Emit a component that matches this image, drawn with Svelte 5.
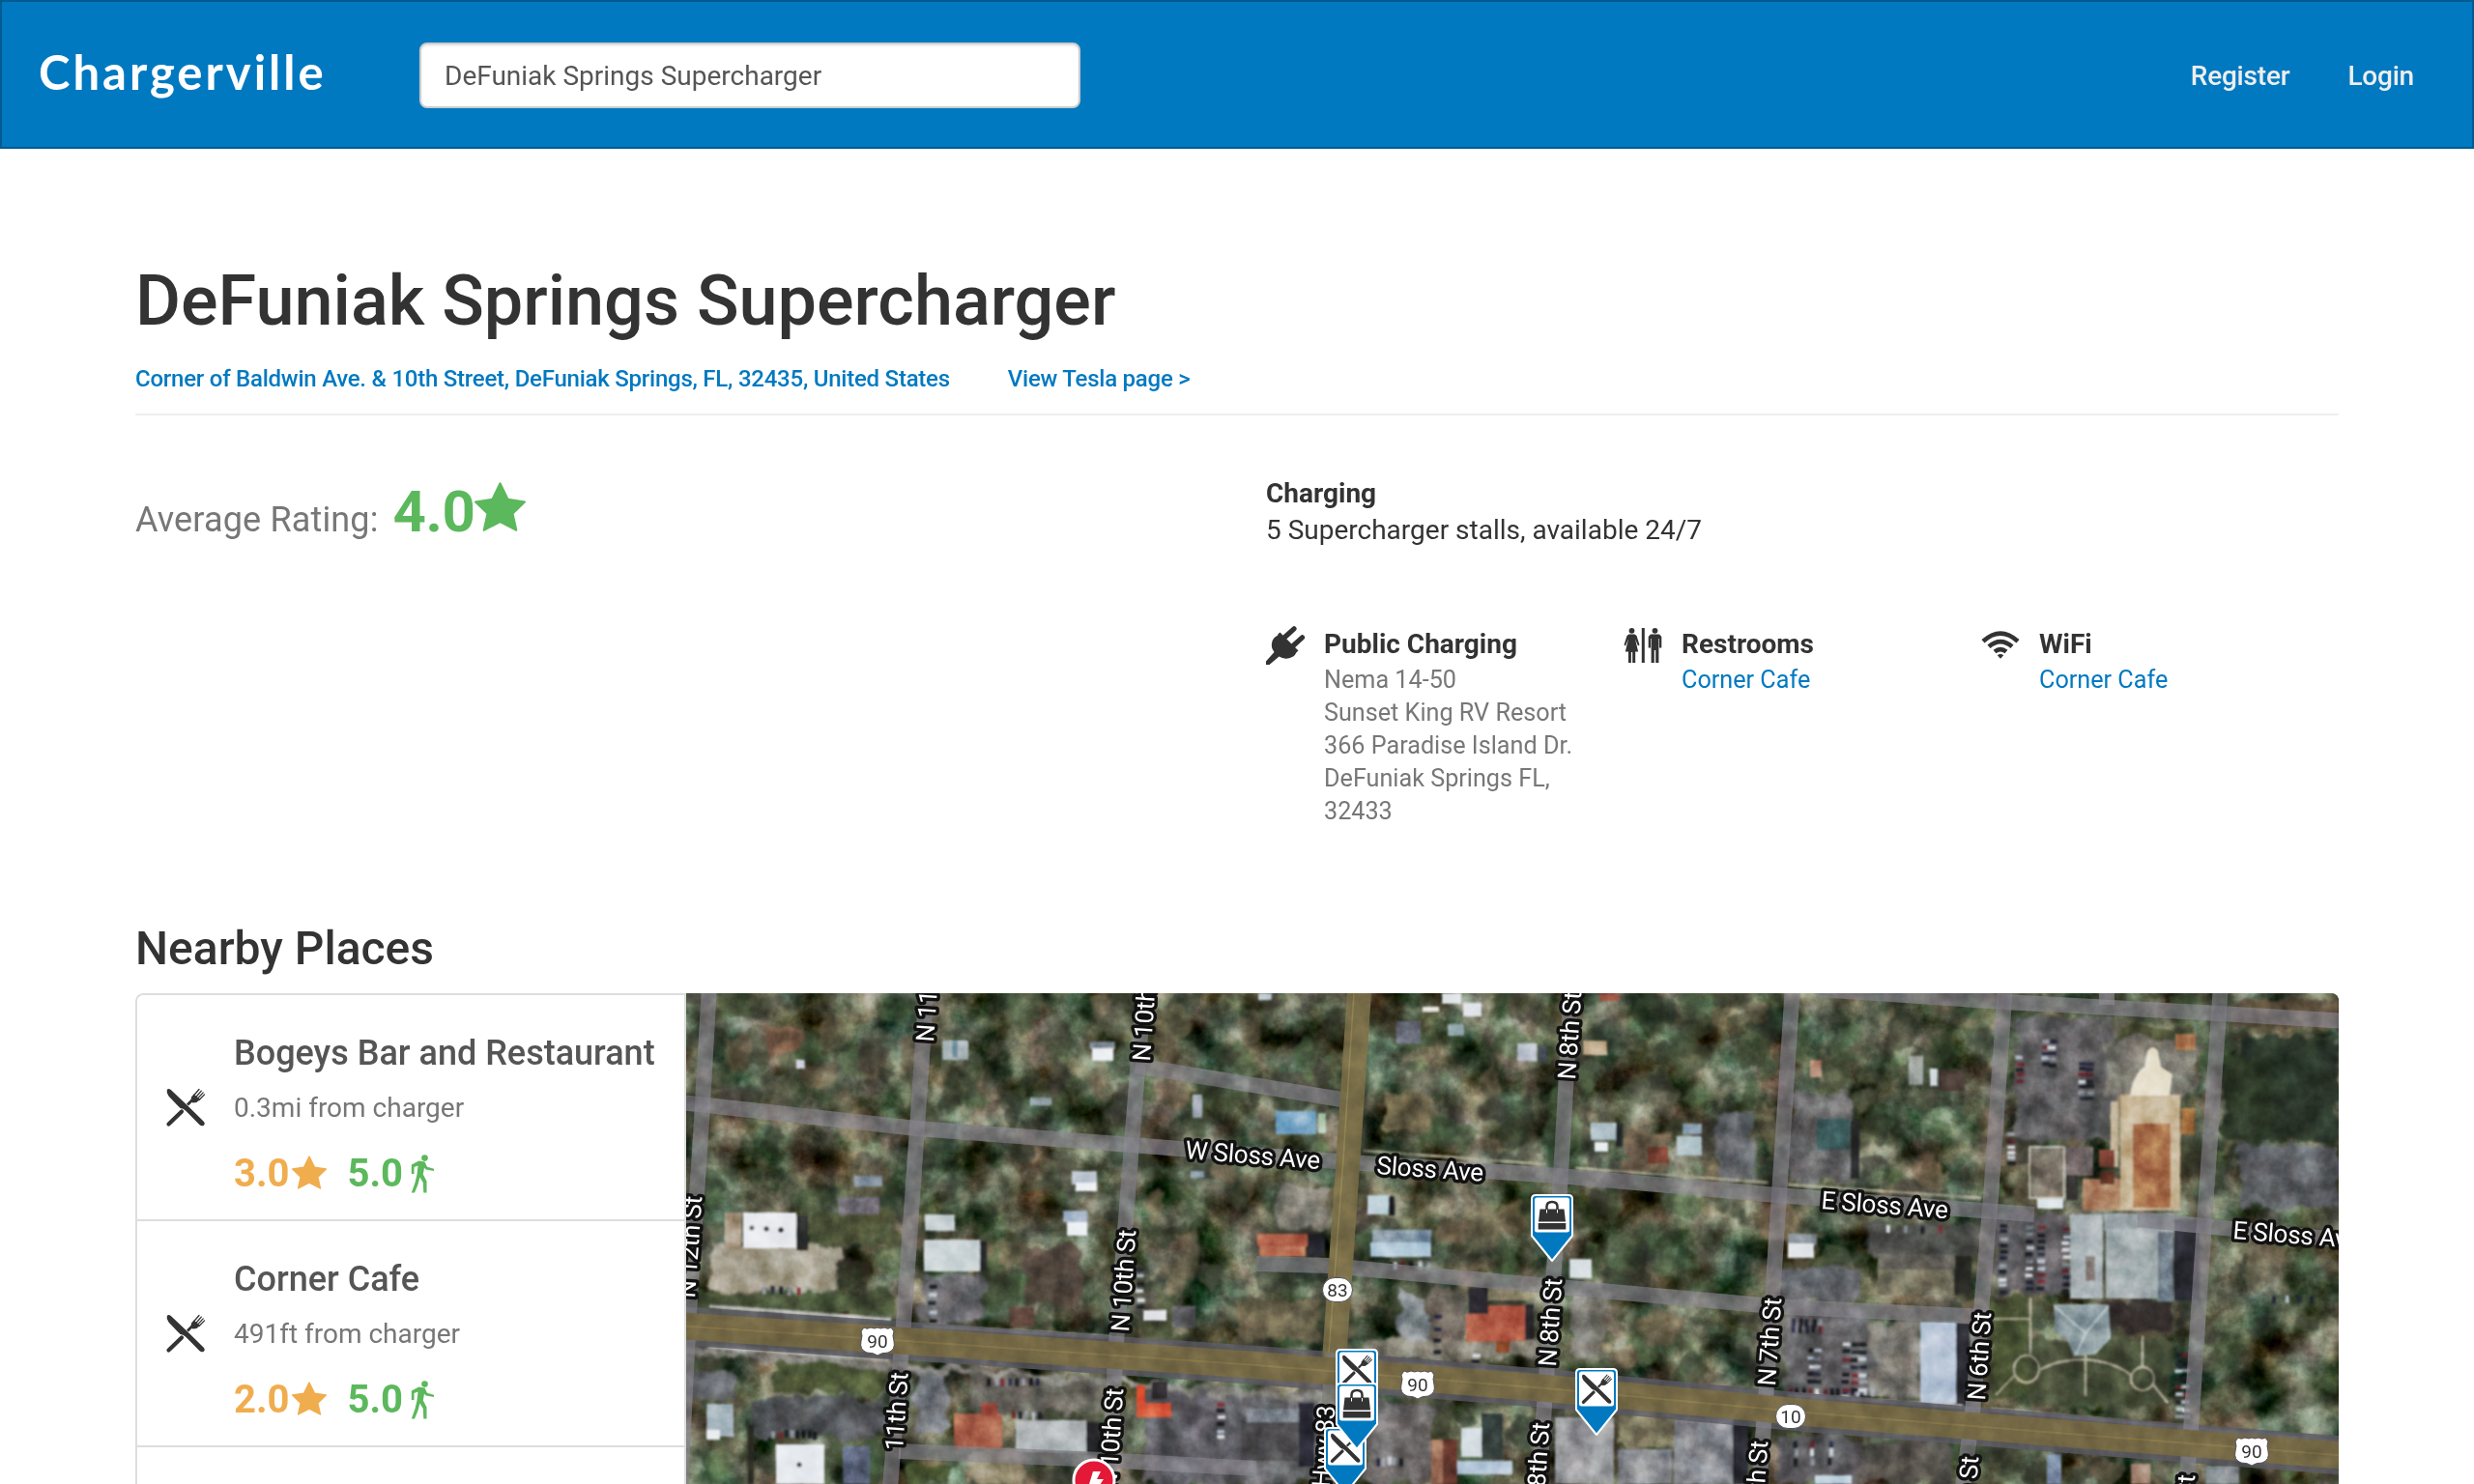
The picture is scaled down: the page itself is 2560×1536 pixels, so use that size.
<script>
  const details = [
    { icon: 'plug', title: 'Public Charging', lines: ['Nema 14-50', 'Sunset King RV Resort', '366 Paradise Island Dr.', 'DeFuniak Springs FL,', '32433'] },
    { icon: 'restroom', title: 'Restrooms', link: 'Corner Cafe' },
    { icon: 'wifi', title: 'WiFi', link: 'Corner Cafe' }
  ];

  const places = [
    { name: 'Bogeys Bar and Restaurant', distance: '0.3mi from charger', rating: '3.0', walk: '5.0' },
    { name: 'Corner Cafe', distance: '491ft from charger', rating: '2.0', walk: '5.0' }
  ];

  // Seeded generator, so the terrain is the same on every load.
  let seed = 11;
  const rnd = () => (seed = (seed * 16807) % 2147483647) / 2147483647;

  const treeColours = ['#2a3526', '#323d2b', '#38452f', '#43573a', '#4c6140', '#3a3734', '#6a604b', '#76654f', '#47503a', '#30362c', '#585648'];
  const trees = Array.from({ length: 640 }, () => ({
    x: 710 + rnd() * 1710,
    y: 1028 + rnd() * 508,
    rx: 6 + rnd() * 15,
    ry: 6 + rnd() * 17,
    fill: treeColours[Math.floor(rnd() * treeColours.length)]
  }));

  // Ground areas: x, y, width, height, colour
  const ground = [
    [735, 1288, 133, 48, '#b0a997'], [838, 1253, 90, 36, '#51563b'], [953, 1320, 65, 48, '#6b696f'],
    [722, 1338, 205, 22, '#485338'], [777, 1447, 138, 40, '#55565d'], [800, 1408, 112, 34, '#4a5534'], [1006, 1425, 138, 36, '#6a6660'],
    [949, 1420, 31, 63, '#7b7e86'], [710, 1420, 50, 30, '#63646a'], [1185, 1440, 110, 96, '#5f5e66'],
    [1000, 1500, 60, 36, '#a09478'], [935, 1515, 50, 21, '#46532f'], [792, 1067, 36, 22, '#84604c'], [1280, 1345, 85, 45, '#686049'],
    [1060, 1290, 60, 60, '#54483f'], [1778, 1147, 36, 76, '#67696f'], [1322, 1227, 50, 44, '#858178'],
    [1479, 1333, 38, 77, '#6e645c'], [1447, 1340, 30, 65, '#8f959c'], [1408, 1385, 190, 22, '#8b867b'],
    [1414, 1450, 68, 86, '#716c6e'], [1290, 1440, 80, 96, '#6a6b70'], [1846, 1353, 90, 95, '#68656a'], [1630, 1340, 30, 70, '#8a8780'],
    [1680, 1170, 45, 40, '#756350'], [1430, 1130, 50, 40, '#6a6148'], [1853, 1130, 62, 92, '#6a686b'],
    [1932, 1267, 115, 34, '#50504e'], [1840, 1313, 84, 34, '#686a70'], [1936, 1370, 52, 78, '#85817b'],
    [2085, 1053, 100, 127, '#625f63'], [2066, 1255, 76, 84, '#5e5b60'], [2190, 1063, 82, 20, '#4c5036'],
    [2180, 1075, 92, 60, '#7f7c74'], [2062, 1343, 38, 102, '#4b5535'], [2100, 1385, 145, 72, '#464c37'],
    [2318, 1075, 102, 106, '#28332a'], [2300, 1095, 50, 85, '#2a3524'], [2318, 1185, 102, 66, '#5f6168'], [2175, 1345, 72, 34, '#342d2b'],
    [1840, 1487, 84, 49, '#5d5b60'], [1924, 1493, 96, 43, '#55514d'], [1674, 1462, 60, 36, '#8a8468'], [2310, 1036, 110, 28, '#5d4f3d']
  ];

  // Buildings and other crisp shapes
  const buildings = [
    [824, 1258, 12, 36, '#2b2b2b'], [769, 1255, 55, 37, '#e9ebef'], [750, 1255, 17, 38, '#a6957f'], [975, 1077, 27, 20, '#a9b5b8'], [985, 1077, 6, 18, '#5e7f93'],
    [1127, 1078, 27, 8, '#84909a'], [1130, 1085, 22, 13, '#eceff1'], [1109, 1212, 26, 14, '#c3cbd5'], [1113, 1224, 22, 9, '#f0f2f5'],
    [1100, 1253, 25, 12, '#a3b4c8'], [1104, 1265, 21, 14, '#eef1f4'], [957, 1257, 31, 17, '#c9d1d4'], [1014, 1285, 7, 30, '#25262b'],
    [956, 1283, 58, 33, '#ced6d8'], [1183, 1356, 24, 11, '#e2e5e8'], [1213, 1352, 24, 22, '#66666a'], [1045, 1353, 25, 20, '#5f443b'],
    [987, 1463, 50, 37, '#a8614b'], [1015, 1452, 17, 14, '#a04b3e'], [1051, 1470, 73, 33, '#b5babc'], [1124, 1472, 15, 34, '#26272b'],
    [1176, 1434, 9, 33, '#e05233'], [1176, 1452, 36, 15, '#d85a3c'], [1192, 1430, 16, 18, '#2d2b2d'], [731, 1453, 28, 34, '#a9b8c0'], [731, 1480, 14, 10, '#e8ecef'],
    [774, 1475, 6, 61, '#2c2a24'], [803, 1495, 50, 41, '#e6eaef'], [872, 1497, 28, 39, '#5e6880'], [884, 1217, 29, 11, '#8b97a4'], [868, 1239, 42, 18, '#6c6870'],
    [1234, 1133, 10, 24, '#959daa'], [824, 1097, 9, 9, '#cdd0da'], [1066, 1136, 22, 8, '#81929a'], [1232, 1212, 14, 7, '#93a2b0'],
    [1492, 1028, 20, 11, '#e3e6e9'], [1472, 1042, 17, 5, '#e8e4dd'], [1514, 1038, 19, 14, '#e2e5ea'], [1570, 1080, 20, 18, '#b5bcc8'], [1592, 1082, 8, 16, '#454b57'],
    [1445, 1057, 25, 23, '#666874'], [1498, 1060, 17, 12, '#8fa4a8'], [1638, 1077, 25, 15, '#c4ae90'], [1655, 1028, 20, 8, '#99503f'], [1302, 1028, 14, 7, '#c5cfd5'],
    [1320, 1150, 42, 24, '#82adca'], [1364, 1152, 8, 21, '#bcd0bb'], [1646, 1162, 26, 18, '#a8bbc2'], [1650, 1182, 14, 10, '#e9eef1'], [1672, 1163, 7, 24, '#24262b'],
    [1741, 1163, 20, 11, '#8ba1b2'], [1735, 1176, 26, 20, '#b2c3c8'], [1705, 1187, 21, 17, '#713a2e'], [1415, 1237, 22, 20, '#c4d4dc'], [1437, 1238, 6, 20, '#202425'],
    [1420, 1273, 61, 14, '#8798a8'], [1418, 1286, 63, 15, '#b0c7d7'], [1301, 1277, 52, 13, '#b0604a'], [1303, 1290, 48, 11, '#c07d60'], [1353, 1277, 18, 24, '#28272d'],
    [1624, 1303, 23, 20, '#d9e0e3'], [1520, 1333, 20, 40, '#2d2b31'], [1540, 1332, 50, 14, '#8d866c'], [1517, 1360, 30, 29, '#b45e48'], [1540, 1351, 38, 37, '#b45c46'], [1578, 1350, 9, 36, '#2d2b2e'], [1548, 1388, 14, 12, '#94502f'],
    [1512, 1478, 21, 30, '#d0d9df'], [1508, 1512, 57, 14, '#b2c4d6'], [1533, 1463, 22, 47, '#34403c'], [1481, 1490, 12, 46, '#9a6b55'], [1493, 1490, 15, 46, '#6f3c30'],
    [1609, 1467, 61, 69, '#9c9c9f'], [1674, 1500, 56, 36, '#8f9196'], [1732, 1467, 61, 69, '#888a90'], [1793, 1467, 16, 69, '#2a2a33'], [1284, 1470, 60, 42, '#4d4c4e'], [1290, 1458, 54, 14, '#7c838c'], [1344, 1452, 16, 66, '#2b2935'],
    [1880, 1158, 34, 32, '#3c5c5d'], [1915, 1160, 9, 60, '#272726'], [1850, 1277, 30, 12, '#87939b'], [1850, 1287, 27, 15, '#e4e7e9'], [1975, 1093, 15, 30, '#9aa19b'], [1997, 1106, 8, 18, '#d7dce1'], [2006, 1107, 27, 22, '#463a36'], [1873, 1097, 12, 18, '#bb9480'],
    [1943, 1298, 80, 16, '#5e5c54'], [1943, 1314, 78, 26, '#76725f'], [2023, 1300, 17, 40, '#272824'], [1987, 1368, 37, 85, '#bac7d8'], [2024, 1370, 14, 84, '#2a2930'],
    [2100, 1187, 36, 54, '#7d7569'], [2137, 1187, 29, 30, '#6d6263'], [2138, 1216, 12, 26, '#302d2d'], [2108, 1241, 27, 10, '#dbe4e8'], [2155, 1220, 42, 33, '#b38a6b'],
    [2194, 1133, 62, 120, '#c6b494'], [2207, 1163, 39, 87, '#a9704b'], [2184, 1140, 8, 68, '#c9bba2'], [2257, 1147, 14, 27, '#a26d3d'], [2251, 1070, 21, 17, '#b48a5e'], [2172, 1190, 16, 18, '#7e4336'], [2173, 1212, 15, 14, '#603528'],
    [2142, 1257, 34, 87, '#a9b2b6'], [2177, 1256, 72, 18, '#9aa3a6'], [2179, 1272, 70, 72, '#a7b0b2'], [2233, 1275, 16, 72, '#727f8b'], [2250, 1262, 26, 84, '#292a31'], [2158, 1300, 10, 26, '#766d6b'],
    [2282, 1517, 35, 19, '#8a9297'], [1878, 1527, 38, 9, '#c5d5e0'], [2118, 1505, 15, 31, '#6f819c'], [2205, 1515, 20, 21, '#a98a78']
  ];

  // Rows of parked cars: x, y, columns, rows, column step, row step
  const lots = [
    [2068, 1265, 1, 11, 0, 7], [2095, 1268, 2, 10, 12, 7], [2133, 1270, 1, 10, 0, 7], [2112, 1075, 2, 5, 7, 6], [2085, 1092, 1, 5, 0, 6], [2150, 1098, 2, 7, 8, 6],
    [2076, 1172, 1, 6, 0, 6], [1850, 1436, 13, 1, 7, 0], [1870, 1395, 2, 5, 6, 8], [1905, 1388, 3, 8, 9, 8], [1853, 1364, 5, 2, 7, 7], [1950, 1268, 4, 1, 18, 0],
    [1021, 1425, 8, 1, 7, 0], [1045, 1460, 5, 1, 7, 0], [798, 1480, 8, 1, 6, 0], [787, 1331, 5, 1, 9, 0], [1423, 1508, 5, 1, 6, 0], [960, 1328, 1, 5, 0, 9],
    [1440, 1305, 5, 1, 9, 0], [1483, 1360, 1, 5, 0, 12], [1522, 1400, 1, 4, 0, 7], [1175, 1310, 1, 6, 0, 8], [2250, 1400, 2, 9, 7, 8], [1258, 1450, 1, 6, 0, 7], [1855, 1490, 3, 3, 18, 9], [2350, 1340, 4, 1, 13, 0]
  ];
  const carColours = ['#1f2229', '#d6dae0', '#8e949d', '#27293c', '#6c2a32', '#b9c1cc', '#1b1c22'];
  const cars = lots.flatMap(([x, y, cols, rows, dx, dy]) =>
    Array.from({ length: cols * rows }, (_, i) => ({
      x: x + (i % cols) * dx + rnd() * 2,
      y: y + Math.floor(i / cols) * dy + rnd() * 2,
      w: rows > cols ? 8 : 4,
      h: rows > cols ? 4 : 8,
      fill: carColours[Math.floor(rnd() * carColours.length)]
    }))
  );

  const streets = [
    'M734 1020L726 1160L713 1360L704 1540', 'M959 1020L949 1168L935 1370L921 1540', 'M1184 1020L1171 1185L1155 1390L1147 1540',
    'M1626 1020L1616 1200L1600 1427L1592 1540', 'M1855 1020L1841 1237L1827 1450L1820 1540', 'M2075 1020L2060 1240L2041 1463L2031 1540',
    'M2298 1020L2281 1265L2267 1480L2262 1540', 'M704 1141L949 1168L1171 1185L1395 1203L1613 1217L1839 1237L2105 1257', 'M2212 1262L2281 1269L2430 1284',
    'M1175 1103L1388 1138', 'M1300 1308L1375 1310L1601 1331L1835 1352L2055 1363', 'M1880 1024L2074 1037L2297 1049L2430 1057', 'M930 1502L1140 1511L1300 1520', 'M2180 1020L2180 1040'
  ];

  const highway = 'M700 1372L908 1386L1300 1413L1600 1437L1880 1463L2140 1484L2430 1507';

  const labels = [
    ['W Sloss Ave', 1226, 1199, 4.5], ['Sloss Ave', 1424, 1215, 4], ['E Sloss Ave', 1884, 1251, 4.5], ['E Sloss Ave', 2310, 1282, 4.5],
    ['N 11th St', 966, 1079, -86], ['N 10th St', 1190, 1099, -86], ['N 12th St', 719, 1344, -86], ['N 10th St', 1168, 1379, -86],
    ['11th St', 934, 1502, -86], ['N 10th St', 1155, 1543, -86], ['US Hwy 83', 1373, 1578, -86], ['N 8th St', 1630, 1118, -86],
    ['N 8th St', 1610, 1415, -86], ['N 8th St', 1597, 1564, -86], ['N 7th St', 1837, 1435, -86], ['N 7th St', 1823, 1583, -86],
    ['N 6th St', 2054, 1450, -86], ['N 6th St', 2041, 1599, -86], ['N 5th St', 2265, 1618, -86]
  ];

  const shields = [
    { text: '90', x: 908, y: 1388, us: true }, { text: '83', x: 1384, y: 1335, us: false }, { text: '90', x: 1467, y: 1433, us: true },
    { text: '10', x: 1853, y: 1466, us: false }, { text: '90', x: 2330, y: 1502, us: true }
  ];

  const pins = [
    { x: 1606, y: 1236, kind: 'bag' }, { x: 1652, y: 1416, kind: 'food' }, { x: 1404, y: 1396, kind: 'food' },
    { x: 1392, y: 1477, kind: 'food' }, { x: 1404, y: 1431, kind: 'bag' }
  ];
</script>

{#snippet utensils()}
  <path d="M.8 2.300Q2 -.3 4.800 2L22 18.200 38.500 34.500Q40.800 37 38.900 38.700 36.800 40.300 34.300 38L20.500 24 17.500 21.800Q14 21.500 11.500 18L2.500 8.500Q0 5 .8 2.300Z" fill="#333" />
  <path d="M2.500 37.500L16 24.500" stroke="#333" stroke-width="4.200" stroke-linecap="round" />
  <path d="M22 17.500L29 10.500" stroke="#333" stroke-width="2.800" />
  <path d="M26 9.500L28.500 6.500 35 11.800 31.500 15 27.500 15.500 25.500 13.500Z" fill="#333" />
  <path d="M28.800 7.500L34 1.500M30.900 9.300L36.300 3.100M32.600 10.900L38.200 4.900M34 12.500L39.600 6.900" stroke="#333" stroke-width="1.300" stroke-linecap="round" />
{/snippet}

{#snippet star(cls)}
  <svg class={cls} viewBox="0 0 52 50"><path d="M26 1.2L34 17.5 51 20 38.8 32 42.5 48.8 26 40.3 9.5 48.8 13.2 32 1 20 18 17.5Z" fill="currentColor" stroke="currentColor" stroke-width="2" stroke-linejoin="round" /></svg>
{/snippet}

<div class="page">
  <header>
    <a class="brand" href="#home">Chargerville</a>
    <input type="text" value="DeFuniak Springs Supercharger" aria-label="Search" />
    <nav>
      <a href="#register">Register</a>
      <a href="#login">Login</a>
    </nav>
  </header>

  <main>
    <h1>DeFuniak Springs Supercharger</h1>
    <div class="links">
      <a href="#map">Corner of Baldwin Ave. &amp; 10th Street, DeFuniak Springs, FL, 32435, United States</a>
      <a href="#tesla">View Tesla page &gt;</a>
    </div>

    <section class="info">
      <div class="average">
        <span class="label">Average Rating:</span>
        <span class="score">4.0</span>
        {@render star('big-star')}
      </div>
      <div class="charging">
        <h4>Charging</h4>
        <p>5 Supercharger stalls, available 24/7</p>
        <div class="details">
          {#each details as item}
            <div class="detail">
              <svg class="detail-icon" viewBox="0 0 40 40">
                {#if item.icon === 'plug'}
                  <path d="M29 2.8L20 11M37.5 11.8L28.5 20" stroke="#333" stroke-width="5.2" stroke-linecap="round" />
                  <path d="M14.5 6.5L33.5 25.5 31.3 27.6Q29.500 32 24 33.300 18 34.500 13.500 31.500L3.500 40H0V36.500L8.500 27Q4.500 22 6.500 15.500 8 11.500 12.300 9.500V8.500Z" fill="#333" />
                {:else if item.icon === 'restroom'}
                  <g fill="#333">
                    <circle cx="8.500" cy="4.800" r="2.900" /><circle cx="32.500" cy="4.800" r="2.900" />
                    <rect x="18.800" y="2" width="3" height="36" />
                    <path d="M5.500 8.500H11.500L13.500 10 16.500 19.500 15 20.500 12 13.500 15.200 26.500H12.200V38H9.200V27H7.900V38H5V26.500H1.800L5 13.500 2 20.500 .500 19.500 3.500 10Z" />
                    <path d="M28 8.500H37L39.300 11V22.500H37V13H36.400V38H33.200V25H31.800V38H28.600V13H28V22.500H25.700V11Z" />
                  </g>
                {:else}
                  <path d="M2 15.800Q20 -.6 38 15.800M8 21.300Q20 10.800 32 21.300M14 26.500Q20 21.700 26 26.500" fill="none" stroke="#333" stroke-width="4.600" />
                  <path d="M16.800 30.300Q20 27.500 23.200 30.300L20 33.800Z" fill="#333" />
                {/if}
              </svg>
              <div>
                <h4>{item.title}</h4>
                {#if item.link}
                  <a class="detail-link" href="#cafe">{item.link}</a>
                {:else}
                  <address>{#each item.lines as line}<span>{line}</span>{/each}</address>
                {/if}
              </div>
            </div>
          {/each}
        </div>
      </div>
    </section>

    <h2>Nearby Places</h2>
    <section class="nearby">
      <ul>
        {#each places as place}
          <li>
            <svg class="food-icon" viewBox="0 0 40 40">{@render utensils()}</svg>
            <div class="place">
              <h3>{place.name}</h3>
              <p>{place.distance}</p>
              <div class="scores">
                <span class="stars">{place.rating}{@render star('small-star')}</span>
                <span class="walk">{place.walk}
                  <svg class="walker" viewBox="0 0 24 40">
                    <circle cx="14.500" cy="3.600" r="3.300" fill="currentColor" />
                    <path d="M8.500 6.500L14.500 7.500 17 12.800 24 14.800V17L15.800 15.600 14 13.800 12.800 20.500 16.500 27.500V39.500H13.300L12.800 29 9.500 23.500 7.500 31 4 39.500H.800L4.500 29 6.500 20.500 7.500 11.500 3.500 13V20H.800V10.500Z" fill="currentColor" />
                  </svg>
                </span>
              </div>
            </div>
          </li>
        {/each}
        <li></li>
      </ul>

      <svg class="map" viewBox="710 1028 1710 508">
        <defs>
          <filter id="terrain" x="0" y="0" width="100%" height="100%" color-interpolation-filters="sRGB">
            <feTurbulence type="fractalNoise" baseFrequency="0.022" numOctaves="5" seed="8" />
            <feColorMatrix values="1 .25 0 0 -.3  1 -.03 0 0 -.14  .95 0 .1 0 -.26  0 0 0 0 1" />
          </filter>
          <filter id="grain" x="0" y="0" width="100%" height="100%" color-interpolation-filters="sRGB">
            <feTurbulence type="fractalNoise" baseFrequency="0.045" numOctaves="4" seed="3" />
            <feColorMatrix values="1.500 .15 0 0 -.34  1.500 0 0 0 -.26  1.500 0 .1 0 -.31  0 0 0 0 1" />
          </filter>
          <filter id="soft" x="-5%" y="-5%" width="110%" height="110%">
            <feTurbulence type="fractalNoise" baseFrequency="0.05" numOctaves="3" seed="5" />
            <feDisplacementMap in="SourceGraphic" scale="20" xChannelSelector="R" yChannelSelector="G" />
            <feGaussianBlur stdDeviation="1.800" />
          </filter>
          <filter id="edge" x="-5%" y="-5%" width="110%" height="110%"><feGaussianBlur stdDeviation="0.900" /></filter>
        </defs>

        <rect x="710" y="1028" width="1710" height="508" filter="url(#terrain)" />
        <g filter="url(#soft)">
          <g opacity="0.620">
            {#each trees as t}<ellipse cx={t.x} cy={t.y} rx={t.rx} ry={t.ry} fill={t.fill} />{/each}
          </g>
          <g opacity="0.920">
            {#each ground as [x, y, w, h, fill]}<rect {x} {y} width={w} height={h} {fill} />{/each}
          </g>
          <path d="M700 1397L1380 1448" stroke="#88857f" stroke-width="8" />
        </g>

        <g filter="url(#edge)">
          {#each buildings as [x, y, w, h, fill]}<rect {x} {y} width={w} height={h} {fill} />{/each}
          {#each cars as c}<rect x={c.x} y={c.y} width={c.w} height={c.h} fill={c.fill} />{/each}
          <path d="M2204 1134Q2207 1112 2219 1104L2222 1088Q2228 1080 2233 1088L2236 1104 2248 1112 2245 1134Z" fill="#e6dfcc" />
          <path d="M2100 1187H2136V1240H2100Z" fill="none" stroke="#c0bbb0" stroke-width="2" />
          <path d="M2125 1350L2182 1350 2184 1385 2168 1402 2146 1404 2138 1385 2126 1378Z" fill="#8e9da2" />
          <path d="M2126 1352L2158 1380 2182 1352M2158 1380L2148 1402" fill="none" stroke="#bbc7ca" stroke-width="2" />
          <g fill="none" stroke="#aaa692" stroke-width="2.500">
            <ellipse cx="2097" cy="1417" rx="13" ry="14" /><ellipse cx="2217" cy="1427" rx="12" ry="12" />
            <path d="M2110 1418Q2130 1407 2158 1407 2190 1410 2206 1424M2158 1400V1445M2101 1343V1402M2062 1365H2101M2217 1383V1414M2084 1424L2065 1444M2228 1433L2243 1452" />
          </g>
          <path d="M734 1352L922 1366M955 1373L1150 1384M1405 1408L1590 1424" stroke="#b9bab8" stroke-width="4" />
          <path d="M733 1394L920 1408M2060 1459L2420 1493M1850 1444L2030 1456" stroke="#a8a8a4" stroke-width="4" />
          <path d="M1410 1191L1600 1205M1630 1209L1830 1224M1850 1226L2050 1240" stroke="#a7a28e" stroke-width="2.500" />
          <circle cx="778" cy="1271" r="2.500" fill="#333" /><circle cx="793" cy="1272" r="2.500" fill="#333" /><circle cx="808" cy="1273" r="2.500" fill="#333" />
          <circle cx="827" cy="1516" r="2.500" fill="#444" />
        </g>

        <rect class="grain" x="710" y="1028" width="1710" height="508" filter="url(#grain)" />

        <g fill="none">
          <path d={highway} stroke="#5c5b63" stroke-width="40" opacity="0.850" />
          {#each streets as d}<path {d} stroke="#85828a" stroke-width="16" opacity="0.680" />{/each}
          <path d="M1407 1020L1395 1200L1380 1415" stroke="#786d48" stroke-width="25" />
          <path d="M1380 1400L1371 1540" stroke="#7b7973" stroke-width="18" opacity="0.800" />
          <path d={highway} stroke="#746845" stroke-width="28" />
          <path d={highway} stroke="#8d7d4d" stroke-width="2" opacity="0.600" />
          <path d="M1401 1028L1390 1200L1375 1400" stroke="#9a8b55" stroke-width="1.500" opacity="0.700" />
        </g>
        <rect class="grain light" x="710" y="1028" width="1710" height="508" filter="url(#grain)" />

        {#each labels as [text, x, y, angle]}
          <text class="street" transform="translate({x} {y}) rotate({angle})">{text}</text>
        {/each}

        {#each shields as s}
          <g transform="translate({s.x} {s.y})">
            {#if s.us}
              <path d="M-14 -14Q-11 -11.500 -7 -14 -3 -12 0 -14 3 -12 7 -14 11 -11.500 14 -14L17 -10Q15 -6 17 0 19 9 11 12 4 12 0 15 -4 12 -11 12 -19 9 -17 0 -15 -6 -17 -10Z" fill="#fff" stroke="#55525a" stroke-width="1" />
            {:else}
              <rect x="-15.500" y="-12.500" width="31" height="25" rx="12.500" fill="#fff" stroke="#55525a" stroke-width="1" />
            {/if}
            <text class="route" y="6.500">{s.text}</text>
          </g>
        {/each}

        <circle cx="1132" cy="1532" r="21" fill="#e31937" stroke="#fff" stroke-width="3" />
        <path d="M1131 1523H1139L1135 1531H1142L1132 1546H1124Z" fill="#fff" />

        {#each pins as p}
          <g transform="translate({p.x} {p.y})">
            <path d="M-17 1H17Q21 1 21 5V43L0 69 -21 43V5Q-21 1 -17 1Z" fill="#0079c1" stroke="#fff" stroke-width="2" stroke-linejoin="round" />
            <rect x="-18" y="3.500" width="36" height="36" rx="2.500" fill="#fff" />
            {#if p.kind === 'bag'}
              <path d="M-5.500 19V13Q-5.500 8 0 8 5.500 8 5.500 13V19" fill="none" stroke="#333" stroke-width="2.500" />
              <path d="M-12.500 15.500H12.500L14 28.500H-14ZM-14.300 30H14.300V36.500H-14.300Z" fill="#333" />
              <path d="M-5.500 16V19.500M5.500 16V19.500" stroke="#fff" stroke-width="1" />
            {:else}
              <g transform="translate(-15.500 6) scale(.78)">{@render utensils()}</g>
            {/if}
          </g>
        {/each}
      </svg>
    </section>
  </main>
</div>

<style>
  :global(body) { margin: 0; background: #fff; overflow: hidden; }
  .page { width: 2560px; height: 1536px; overflow: hidden; font-family: Roboto, "Liberation Sans", sans-serif; color: #333; }
  h1, h2, h3, h4, p, ul { margin: 0; padding: 0; font-weight: 500; }
  a { color: #0079c1; text-decoration: none; }
  svg { display: block; flex: none; }

  header { box-sizing: border-box; height: 154px; display: flex; align-items: center; background: #0079c1; border: 2px solid #005b91; padding: 0 60px 0 38px; }
  .brand { width: 394px; margin-top: -6px; color: #fff; font: 700 49px/60px Lato, sans-serif; letter-spacing: 3px; }
  input { box-sizing: border-box; width: 684px; height: 68px; margin: 2px 0 0; padding: 0 24px; border: 2px solid #ccc; border-radius: 8px; background: #fff; box-shadow: inset 0 2px 2px rgba(0, 0, 0, 0.075); color: #555; font: 400 28px/42px Roboto, sans-serif; }
  nav { display: flex; gap: 60px; margin-left: auto; margin-top: 3px; }
  nav a { color: #eee; font-size: 28px; line-height: 40px; font-weight: 500; letter-spacing: -0.2px; }

  main { padding: 118px 140px 0; }
  h1 { font-size: 72px; line-height: 80px; }
  .links { display: flex; gap: 60px; margin-top: 23px; padding-bottom: 19px; border-bottom: 2px solid #eee; font-size: 24px; line-height: 34px; font-weight: 500; letter-spacing: -0.24px; }

  .info { display: grid; grid-template-columns: 1170px 1fr; padding-top: 62px; height: 462px; box-sizing: content-box; }
  .average { display: flex; align-items: baseline; height: 80px; margin-top: -1px; color: #5cb85c; }
  .label { color: #777; font-size: 36px; line-height: 78px; margin-right: 15px; letter-spacing: 0.15px; }
  .score { font-size: 60px; line-height: 78px; font-weight: 700; letter-spacing: -0.5px; }
  :global(.big-star) { width: 53px; height: 51px; }
  .charging p { font-size: 28px; line-height: 38px; font-weight: 400; }
  h4 { font-size: 28px; line-height: 38px; font-weight: 700; }
  .details { display: grid; grid-template-columns: repeat(3, 370px); margin-top: 80px; }
  .detail { display: flex; gap: 20px; font-size: 25.2px; line-height: 34px; }
  .detail-icon { width: 40px; height: 40px; overflow: visible; }
  .detail-link { display: block; margin-top: 1px; }
  address { margin-top: 1px; font-style: normal; color: #777; }
  address span { display: block; white-space: nowrap; }

  h2 { font-size: 48px; line-height: 56px; }
  .nearby { display: flex; margin-top: 18px; height: 508px; border-radius: 8px 8px 0 0; overflow: hidden; }
  ul { box-sizing: border-box; width: 570px; border: 2px solid #ddd; border-bottom: 0; border-radius: 8px 0 0 0; list-style: none; }
  li { box-sizing: border-box; height: 234px; display: flex; align-items: center; gap: 30px; padding-left: 30px; border-bottom: 2px solid #ddd; }
  .food-icon { width: 40px; height: 40px; overflow: visible; }
  .place { align-self: flex-start; padding-top: 38px; }
  h3 { color: #555; font-size: 36px; line-height: 44px; white-space: nowrap; }
  .place p { margin-top: 17px; color: #777; font-size: 28px; line-height: 36px; font-weight: 400; }
  .scores { display: flex; gap: 22px; margin-top: 26px; font-size: 40px; line-height: 48px; font-weight: 700; }
  .stars, .walk { display: flex; align-items: center; }
  .stars { color: #f0ad4e; }
  .walk { color: #5cb85c; }
  :global(.small-star) { width: 36px; height: 35px; margin: -4px 0 0 2px; }
  .walker { width: 24px; height: 40px; margin-left: 8px; }

  .map { width: 1710px; height: 508px; background: #4c5040; }
  .grain { mix-blend-mode: overlay; opacity: 0.25; }
  .light { opacity: 0.12; }
  .street { font-size: 26px; letter-spacing: -0.2px; fill: #fff; stroke: #111; stroke-width: 7px; stroke-linejoin: round; paint-order: stroke; }
  .route { font-size: 19px; fill: #333; text-anchor: middle; }
</style>
